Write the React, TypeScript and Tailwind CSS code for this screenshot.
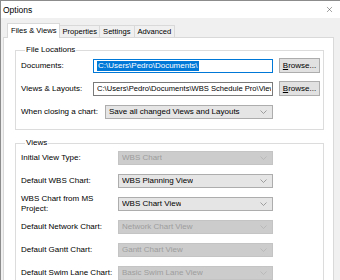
import { X as CloseIcon } from "lucide-react";

type ComboProps = {
  value: string;
  width: string;
  disabled?: boolean;
};

function Chevron({ disabled }: { disabled?: boolean }) {
  return (
    <svg width="7" height="4" viewBox="0 0 7 4" className="shrink-0">
      <path
        d="M0.5 0.5 L3.5 3.5 L6.5 0.5"
        fill="none"
        stroke={disabled ? "#b4b4b4" : "#8a8a8a"}
        strokeWidth="0.8"
      />
    </svg>
  );
}

function Combo({ value, width, disabled }: ComboProps) {
  return (
    <div
      className={`${width} flex h-[14px] items-center justify-between border pl-[3px] pr-[5px] ${
        disabled
          ? "border-[#c4c4c4] bg-[#cccccc] text-[#9d9d9d]"
          : "border-[#adadad] bg-[#e5e5e5] text-black"
      }`}
    >
      <span className="truncate">{value}</span>
      <Chevron disabled={disabled} />
    </div>
  );
}

function BrowseButton() {
  return (
    <button className="ml-[6px] flex h-[15px] w-[41px] items-center justify-center border border-[#adadad] bg-[#e1e1e1] text-black">
      <span>
        <span className="underline">B</span>rowse...
      </span>
    </button>
  );
}

const viewRows: { label: React.ReactNode; value: string; disabled?: boolean }[] = [
  { label: "Initial View Type:", value: "WBS Chart", disabled: true },
  { label: "Default WBS Chart:", value: "WBS Planning View" },
  {
    label: (
      <>
        WBS Chart from MS
        <br />
        Project:
      </>
    ),
    value: "WBS Chart View",
  },
  { label: "Default Network Chart:", value: "Network Chart View", disabled: true },
  { label: "Default Gantt Chart:", value: "Gantt Chart View", disabled: true },
  { label: "Default Swim Lane Chart:", value: "Basic Swim Lane View", disabled: true },
];

export default function App() {
  return (
    <div
      className="flex h-[280px] w-[340px] flex-col overflow-hidden border-l border-t border-[#8c8c8c] bg-[#f0f0f0] text-[8px] leading-[10px] text-black"
      style={{ fontFamily: '"Liberation Sans", Arial, sans-serif' }}
    >
      {/* title bar */}
      <div className="flex h-[17px] shrink-0 items-center justify-between bg-white pl-[2px] pr-[6px]">
        <span className="text-[8.5px]">Options</span>
        <CloseIcon className="size-[9px] text-[#333]" strokeWidth={1.2} />
      </div>

      {/* tabs */}
      <div className="mt-[5px] flex h-[15px] items-end pl-[6px]">
        <div className="relative z-10 -mb-px flex h-[15px] items-center border border-b-0 border-[#d9d9d9] bg-white px-[3px] text-[7.6px]">
          Files &amp; Views
        </div>
        <div className="flex h-[12px] items-center border-r border-t border-[#d9d9d9] bg-[#f0f0f0] px-[2px] text-[7.6px]">
          Properties
        </div>
        <div className="flex h-[12px] items-center border-r border-t border-[#d9d9d9] bg-[#f0f0f0] px-[3px] text-[7.6px]">
          Settings
        </div>
        <div className="flex h-[12px] items-center border-r border-t border-[#d9d9d9] bg-[#f0f0f0] px-[3px] text-[7.6px]">
          Advanced
        </div>
      </div>

      {/* tab panel */}
      <div className="ml-[2px] flex w-[331px] flex-1 flex-col border border-[#d9d9d9] bg-white pl-[11px] pr-[9px] pt-[8px]">
        <fieldset className="border border-[#dcdcdc] pb-[6px] pl-[5px]">
          <legend className="ml-[4px] px-[1px] leading-[8px]">File Locations</legend>
          <div className="flex h-[23px] items-center">
            <span className="w-[72px]">Documents:</span>
            <div className="flex h-[14px] w-[180px] items-center border border-[#0078d7] bg-white pl-[3px]">
              <span className="bg-[#0078d7] px-px text-white">C:\Users\Pedro\Documents\</span>
            </div>
            <BrowseButton />
          </div>
          <div className="flex h-[23px] items-center">
            <span className="w-[72px]">Views &amp; Layouts:</span>
            <div className="flex h-[14px] w-[180px] items-center border border-[#7a7a7a] bg-white pl-[3px] pr-px">
              <span className="block w-full overflow-hidden whitespace-nowrap text-[7.6px]">
                C:\Users\Pedro\Documents\WBS Schedule Pro\View
              </span>
            </div>
            <BrowseButton />
          </div>
          <div className="flex h-[23px] items-center">
            <span className="w-[84px]">When closing a chart:</span>
            <Combo value="Save all changed Views and Layouts" width="w-[168px]" />
          </div>
        </fieldset>

        <fieldset className="mt-[9px] border border-[#dcdcdc] pl-[5px]">
          <legend className="ml-[4px] px-[1px] leading-[8px]">Views</legend>
          <div className="-mt-px flex flex-col">
            {viewRows.map((row, i) => (
              <div key={i} className="flex h-[23px] items-center">
                <span className="w-[97px]">{row.label}</span>
                <Combo value={row.value} width="w-[155px]" disabled={row.disabled} />
              </div>
            ))}
          </div>
        </fieldset>
      </div>
    </div>
  );
}
